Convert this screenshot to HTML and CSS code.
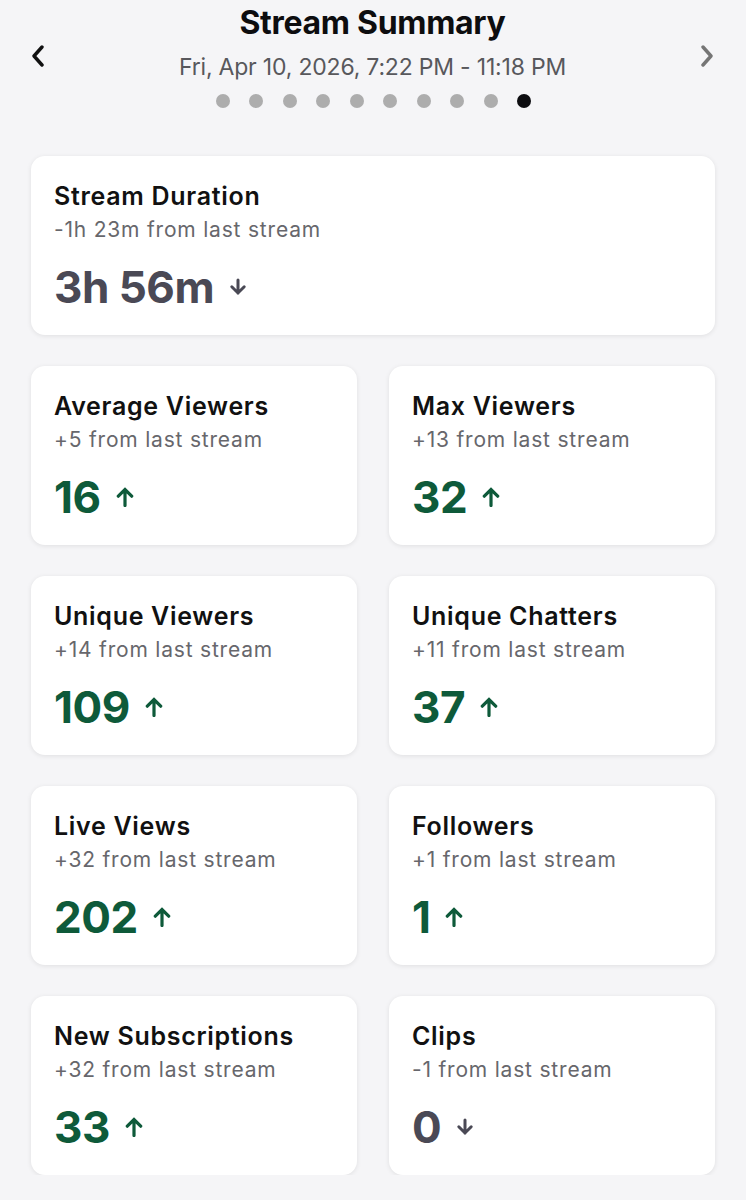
FILE: index.html
```html
<!DOCTYPE html>
<html>
<head>
<meta charset="utf-8">
<link rel="stylesheet" href="styles.css">
</head>
<body>
<div class="page">
  <header class="header">
    <button class="nav nav-prev" aria-label="Previous">
      <svg width="14" height="22" viewBox="0 0 14 22"><polyline points="11,2 3,11 11,20" fill="none" stroke="#111" stroke-width="3.4" stroke-linecap="round" stroke-linejoin="round"/></svg>
    </button>
    <div class="header-center">
      <h1 class="title">Stream Summary</h1>
      <div class="date">Fri, Apr 10, 2026, 7:22 PM - 11:18 PM</div>
      <div class="dots">
        <span class="dot"></span><span class="dot"></span><span class="dot"></span><span class="dot"></span><span class="dot"></span><span class="dot"></span><span class="dot"></span><span class="dot"></span><span class="dot"></span><span class="dot dot-active"></span>
      </div>
    </div>
    <button class="nav nav-next" aria-label="Next">
      <svg width="14" height="22" viewBox="0 0 14 22"><polyline points="3,2 11,11 3,20" fill="none" stroke="#757575" stroke-width="3.4" stroke-linecap="round" stroke-linejoin="round"/></svg>
    </button>
  </header>

  <section class="card card-wide">
    <div class="card-title">Stream Duration</div>
    <div class="card-sub">-1h 23m from last stream</div>
    <div class="card-value down">3h 56m <svg class="arrow" width="18" height="20" viewBox="0 0 18 20"><path d="M9 3 V16 M2.8 9.8 L9 16 L15.2 9.8" fill="none" stroke="currentColor" stroke-width="3" stroke-linecap="round" stroke-linejoin="miter"/></svg></div>
  </section>

  <div class="grid">
    <section class="card">
      <div class="card-title">Average Viewers</div>
      <div class="card-sub">+5 from last stream</div>
      <div class="card-value up">16 <svg class="arrow" width="18" height="20" viewBox="0 0 18 20"><path d="M9 18.5 V2.5 M2.3 9.2 L9 2.5 L15.7 9.2" fill="none" stroke="currentColor" stroke-width="3.2" stroke-linecap="round" stroke-linejoin="miter"/></svg></div>
    </section>
    <section class="card">
      <div class="card-title">Max Viewers</div>
      <div class="card-sub">+13 from last stream</div>
      <div class="card-value up">32 <svg class="arrow" width="18" height="20" viewBox="0 0 18 20"><path d="M9 18.5 V2.5 M2.3 9.2 L9 2.5 L15.7 9.2" fill="none" stroke="currentColor" stroke-width="3.2" stroke-linecap="round" stroke-linejoin="miter"/></svg></div>
    </section>
    <section class="card">
      <div class="card-title">Unique Viewers</div>
      <div class="card-sub">+14 from last stream</div>
      <div class="card-value up">109 <svg class="arrow" width="18" height="20" viewBox="0 0 18 20"><path d="M9 18.5 V2.5 M2.3 9.2 L9 2.5 L15.7 9.2" fill="none" stroke="currentColor" stroke-width="3.2" stroke-linecap="round" stroke-linejoin="miter"/></svg></div>
    </section>
    <section class="card">
      <div class="card-title">Unique Chatters</div>
      <div class="card-sub">+11 from last stream</div>
      <div class="card-value up">37 <svg class="arrow" width="18" height="20" viewBox="0 0 18 20"><path d="M9 18.5 V2.5 M2.3 9.2 L9 2.5 L15.7 9.2" fill="none" stroke="currentColor" stroke-width="3.2" stroke-linecap="round" stroke-linejoin="miter"/></svg></div>
    </section>
    <section class="card">
      <div class="card-title">Live Views</div>
      <div class="card-sub">+32 from last stream</div>
      <div class="card-value up">202 <svg class="arrow" width="18" height="20" viewBox="0 0 18 20"><path d="M9 18.5 V2.5 M2.3 9.2 L9 2.5 L15.7 9.2" fill="none" stroke="currentColor" stroke-width="3.2" stroke-linecap="round" stroke-linejoin="miter"/></svg></div>
    </section>
    <section class="card">
      <div class="card-title">Followers</div>
      <div class="card-sub">+1 from last stream</div>
      <div class="card-value up">1 <svg class="arrow" width="18" height="20" viewBox="0 0 18 20"><path d="M9 18.5 V2.5 M2.3 9.2 L9 2.5 L15.7 9.2" fill="none" stroke="currentColor" stroke-width="3.2" stroke-linecap="round" stroke-linejoin="miter"/></svg></div>
    </section>
    <section class="card">
      <div class="card-title">New Subscriptions</div>
      <div class="card-sub">+32 from last stream</div>
      <div class="card-value up">33 <svg class="arrow" width="18" height="20" viewBox="0 0 18 20"><path d="M9 18.5 V2.5 M2.3 9.2 L9 2.5 L15.7 9.2" fill="none" stroke="currentColor" stroke-width="3.2" stroke-linecap="round" stroke-linejoin="miter"/></svg></div>
    </section>
    <section class="card">
      <div class="card-title">Clips</div>
      <div class="card-sub">-1 from last stream</div>
      <div class="card-value down">0 <svg class="arrow" width="18" height="20" viewBox="0 0 18 20"><path d="M9 3 V16 M2.8 9.8 L9 16 L15.2 9.8" fill="none" stroke="currentColor" stroke-width="3" stroke-linecap="round" stroke-linejoin="miter"/></svg></div>
    </section>
  </div>
</div>
</body>
</html>
```

FILE: styles.css
```css
* { box-sizing: border-box; }
html, body { margin: 0; padding: 0; }
body {
  background: #f5f5f7;
  font-family: Inter, "Noto Sans", "Liberation Sans", sans-serif;
  color: #111;
}
.page {
  width: 746px;
  padding: 0 31px 0 31px;
}
.header {
  display: flex;
  align-items: flex-start;
  justify-content: space-between;
  height: 156px;
  margin: 0 -31px;
  padding: 1px 32px 0 31px;
}
.nav {
  border: 0;
  background: none;
  padding: 0;
  margin-top: 44px;
  width: 14px;
  height: 22px;
  display: block;
}
.nav svg { display: block; }
.header-center {
  display: flex;
  flex-direction: column;
  align-items: center;
  flex: 1;
}
.title {
  margin: 0;
  font-size: 32px;
  font-weight: 700;
  line-height: 44px;
  letter-spacing: -0.3px;
  color: #0d0d0f;
}
.date {
  margin-top: 7px;
  font-size: 23px;
  line-height: 30px;
  color: #58585c;
  letter-spacing: -0.2px;
}
.dots {
  display: flex;
  gap: 19.5px;
  margin-top: 12px;
  padding-left: 2px;
}
.dot {
  width: 14px;
  height: 14px;
  border-radius: 50%;
  background: #adadad;
}
.dot-active { background: #0d0d10; }

.card {
  background: #fff;
  border-radius: 14px;
  box-shadow: 0 1px 5px rgba(0, 0, 0, 0.09);
  padding: 25px 23px 26px 23px;
}
.card-wide { margin-bottom: 31px; }
.grid {
  display: grid;
  grid-template-columns: 1fr 1fr;
  column-gap: 32px;
  row-gap: 31px;
}
.card-title {
  font-size: 25px;
  font-weight: 600;
  line-height: 30px;
  color: #111;
  letter-spacing: 0.7px;
}
.card-sub {
  margin-top: 4px;
  font-size: 21px;
  line-height: 30px;
  color: #67676c;
  letter-spacing: 0.8px;
}
.card-value {
  margin-top: 20px;
  font-size: 44px;
  font-weight: 700;
  line-height: 44px;
  display: flex;
  align-items: center;
  gap: 15px;
  letter-spacing: -0.5px;
}
.card-value .arrow { display: block; }
.up { color: #0e5a3a; }
.down { color: #4a4955; }
```
